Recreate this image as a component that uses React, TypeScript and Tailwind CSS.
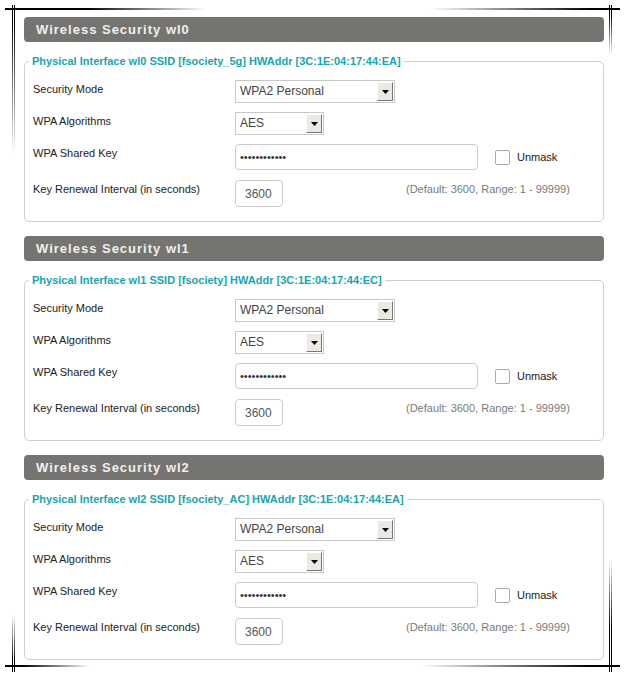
import React from 'react'

const sections = [
  { iface: 'wl0', ssid: 'fsociety_5g', hw: '3C:1E:04:17:44:EA' },
  { iface: 'wl1', ssid: 'fsociety', hw: '3C:1E:04:17:44:EC' },
  { iface: 'wl2', ssid: 'fsociety_AC', hw: '3C:1E:04:17:44:EA' },
]

function Select({ value, wide }: { value: string; wide?: boolean }) {
  return (
    <div
      className={
        'flex h-[23px] items-stretch border border-[#c8c8c8] bg-white ' +
        (wide ? 'w-[160px]' : 'w-[89px]')
      }
    >
      <span className="flex-1 pl-[4px] text-[12px] leading-[21px] text-[#444]">{value}</span>
      <span className="m-[1px] flex w-[16px] items-center justify-center border border-t-white border-l-white border-r-[#777] border-b-[#777] bg-[#ece9e2]">
        <svg width="7" height="4" viewBox="0 0 7 4">
          <path d="M0 0h7L3.5 4z" fill="#000" />
        </svg>
      </span>
    </div>
  )
}

function Row({ label, children }: { label: string; children: React.ReactNode }) {
  return (
    <div className="flex items-start">
      <div className="w-[202px] shrink-0 pt-[3px] text-[11px] leading-[13px] text-[#222]">{label}</div>
      {children}
    </div>
  )
}

function SecuritySection({ iface, ssid, hw }: { iface: string; ssid: string; hw: string }) {
  return (
    <div>
      {/* Title bar */}
      <div className="flex h-[25px] items-center rounded-[4px] bg-[#767471] pl-[12px] text-[13px] font-bold tracking-[1px] text-[#f0f0f0]">
        Wireless Security {iface}
      </div>

      <fieldset className="mt-[13px] rounded-[5px] border border-[#cfcfcf] px-[8px] pt-[12px] pb-[14px]">
        <legend className="ml-[-4px] px-[3px] text-[11px] font-bold leading-[13px] text-[#19a5ad]">
          Physical Interface {iface} SSID [{ssid}] HWAddr [{hw}]
        </legend>

        <div className="flex flex-col gap-[9px]">
          <Row label="Security Mode">
            <Select value="WPA2 Personal" wide />
          </Row>
          <Row label="WPA Algorithms">
            <Select value="AES" />
          </Row>
          <Row label="WPA Shared Key">
            <div className="flex items-center">
              <input
                type="password"
                readOnly
                value="xxxxxxxxxxxx"
                className="h-[26px] w-[243px] rounded-[4px] border border-[#cccccc] bg-white px-[4px] text-[11px] text-[#333] outline-none"
              />
              <span className="ml-[17px] h-[15px] w-[15px] rounded-[2px] border border-[#aaaaaa] bg-white" />
              <span className="ml-[7px] text-[11px] text-[#222]">Unmask</span>
            </div>
          </Row>
          <div className="mt-[1px]">
            <Row label="Key Renewal Interval (in seconds)">
              <div className="flex items-start">
                <div className="flex h-[27px] w-[48px] items-center rounded-[4px] border border-[#cccccc] pl-[9px] text-[12px] text-[#555]">
                  3600
                </div>
                <span className="ml-[123px] pt-[3px] text-[11px] leading-[13px] text-[#7a7a7a]">
                  (Default: 3600, Range: 1 - 99999)
                </span>
              </div>
            </Row>
          </div>
        </div>
      </fieldset>
    </div>
  )
}

export default function App() {
  return (
    <div className="relative h-[676px] w-[624px] overflow-hidden bg-white font-['Liberation_Sans',Arial,sans-serif]">
      <div className="flex flex-col gap-[14px] pt-[17px] pr-[20px] pl-[24px]">
        {sections.map((s) => (
          <SecuritySection key={s.iface} {...s} />
        ))}
      </div>

      {/* screenshot crop marks */}
      <div className="absolute top-[8px] left-[5px] h-[2px] w-[202px] bg-linear-to-r from-black from-40% to-transparent" />
      <div className="absolute top-[5px] left-[12px] h-[150px] w-[1px] bg-linear-to-b from-black from-10% to-transparent" />
      <div className="absolute top-[5px] left-[14px] h-[150px] w-[1px] bg-linear-to-b from-black from-10% to-transparent" />

      <div className="absolute top-[8px] left-[430px] h-[2px] w-[190px] bg-linear-to-r from-transparent to-black to-85%" />
      <div className="absolute top-[5px] left-[609px] h-[50px] w-[1px] bg-linear-to-b from-black from-20% to-transparent" />
      <div className="absolute top-[5px] left-[611px] h-[50px] w-[1px] bg-linear-to-b from-black from-20% to-transparent" />

      <div className="absolute top-[665px] left-[5px] h-[2px] w-[85px] bg-linear-to-r from-black from-20% to-transparent" />
      <div className="absolute top-[615px] left-[12px] h-[57px] w-[1px] bg-linear-to-t from-black from-20% to-transparent" />
      <div className="absolute top-[615px] left-[14px] h-[57px] w-[1px] bg-linear-to-t from-black from-20% to-transparent" />

      <div className="absolute top-[665px] left-[420px] h-[2px] w-[200px] bg-linear-to-r from-transparent to-black to-85%" />
      <div className="absolute top-[560px] left-[609px] h-[112px] w-[1px] bg-linear-to-t from-black from-40% to-transparent" />
      <div className="absolute top-[560px] left-[611px] h-[112px] w-[1px] bg-linear-to-t from-black from-40% to-transparent" />
    </div>
  )
}
